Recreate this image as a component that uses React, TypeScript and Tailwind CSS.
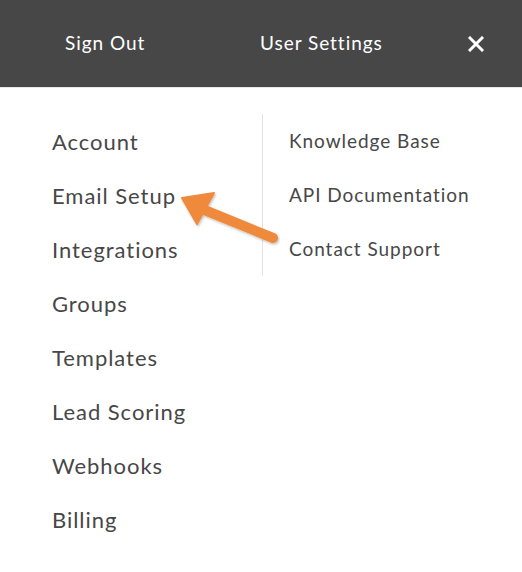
import React from 'react'

const mainLinks = ['Account', 'Email Setup', 'Integrations', 'Groups', 'Templates', 'Lead Scoring', 'Webhooks', 'Billing']
const helpLinks = ['Knowledge Base', 'API Documentation', 'Contact Support']

export default function App() {
  return (
    <div className="relative w-[522px] h-[572px] bg-white text-[#474747] tracking-[0.06em]" style={{ fontFamily: 'Lato, "Open Sans", sans-serif' }}>
      {/* Header */}
      <div className="h-[88px] bg-[#474747] flex items-center text-white text-[19px] border-b border-[#e6e6e6]">
        <span className="ml-[65px] w-[195px]">Sign Out</span>
        <span>User Settings</span>
        <button className="ml-auto mr-[38px] w-[16px] h-[16px] flex items-center justify-center">
          <svg width="16" height="16" viewBox="0 0 16 16" fill="none" stroke="white" strokeWidth="3" strokeLinecap="square">
            <path d="M2 2l12 12M14 2L2 14" />
          </svg>
        </button>
      </div>

      {/* Menu */}
      <div className="flex pt-[26px]">
        <ul className="pl-[52px] w-[262px]">
          {mainLinks.map((l) => (
            <li key={l} className="h-[54px] flex items-center text-[22px]">{l}</li>
          ))}
        </ul>
        <ul className="self-start border-l border-[#e3e3e3] pl-[26px]">
          {helpLinks.map((l) => (
            <li key={l} className="h-[54px] flex items-center text-[19px] pt-[1px]">{l}</li>
          ))}
        </ul>
      </div>

      {/* Annotation arrow */}
      <svg className="absolute left-0 top-0 pointer-events-none" width="522" height="572" viewBox="0 0 522 572">
        <defs>
          <filter id="sh" x="-20%" y="-20%" width="140%" height="140%">
            <feDropShadow dx="1" dy="1.5" stdDeviation="1.2" floodColor="#000" floodOpacity="0.25" />
          </filter>
        </defs>
        <g filter="url(#sh)" fill="#ef8a3e" stroke="#ef8a3e">
          <path d="M273 238L202 209" strokeWidth="10" strokeLinecap="round" fill="none" />
          <path d="M182 198L214 193L197 224Z" strokeWidth="2" strokeLinejoin="round" />
        </g>
      </svg>
    </div>
  )
}
